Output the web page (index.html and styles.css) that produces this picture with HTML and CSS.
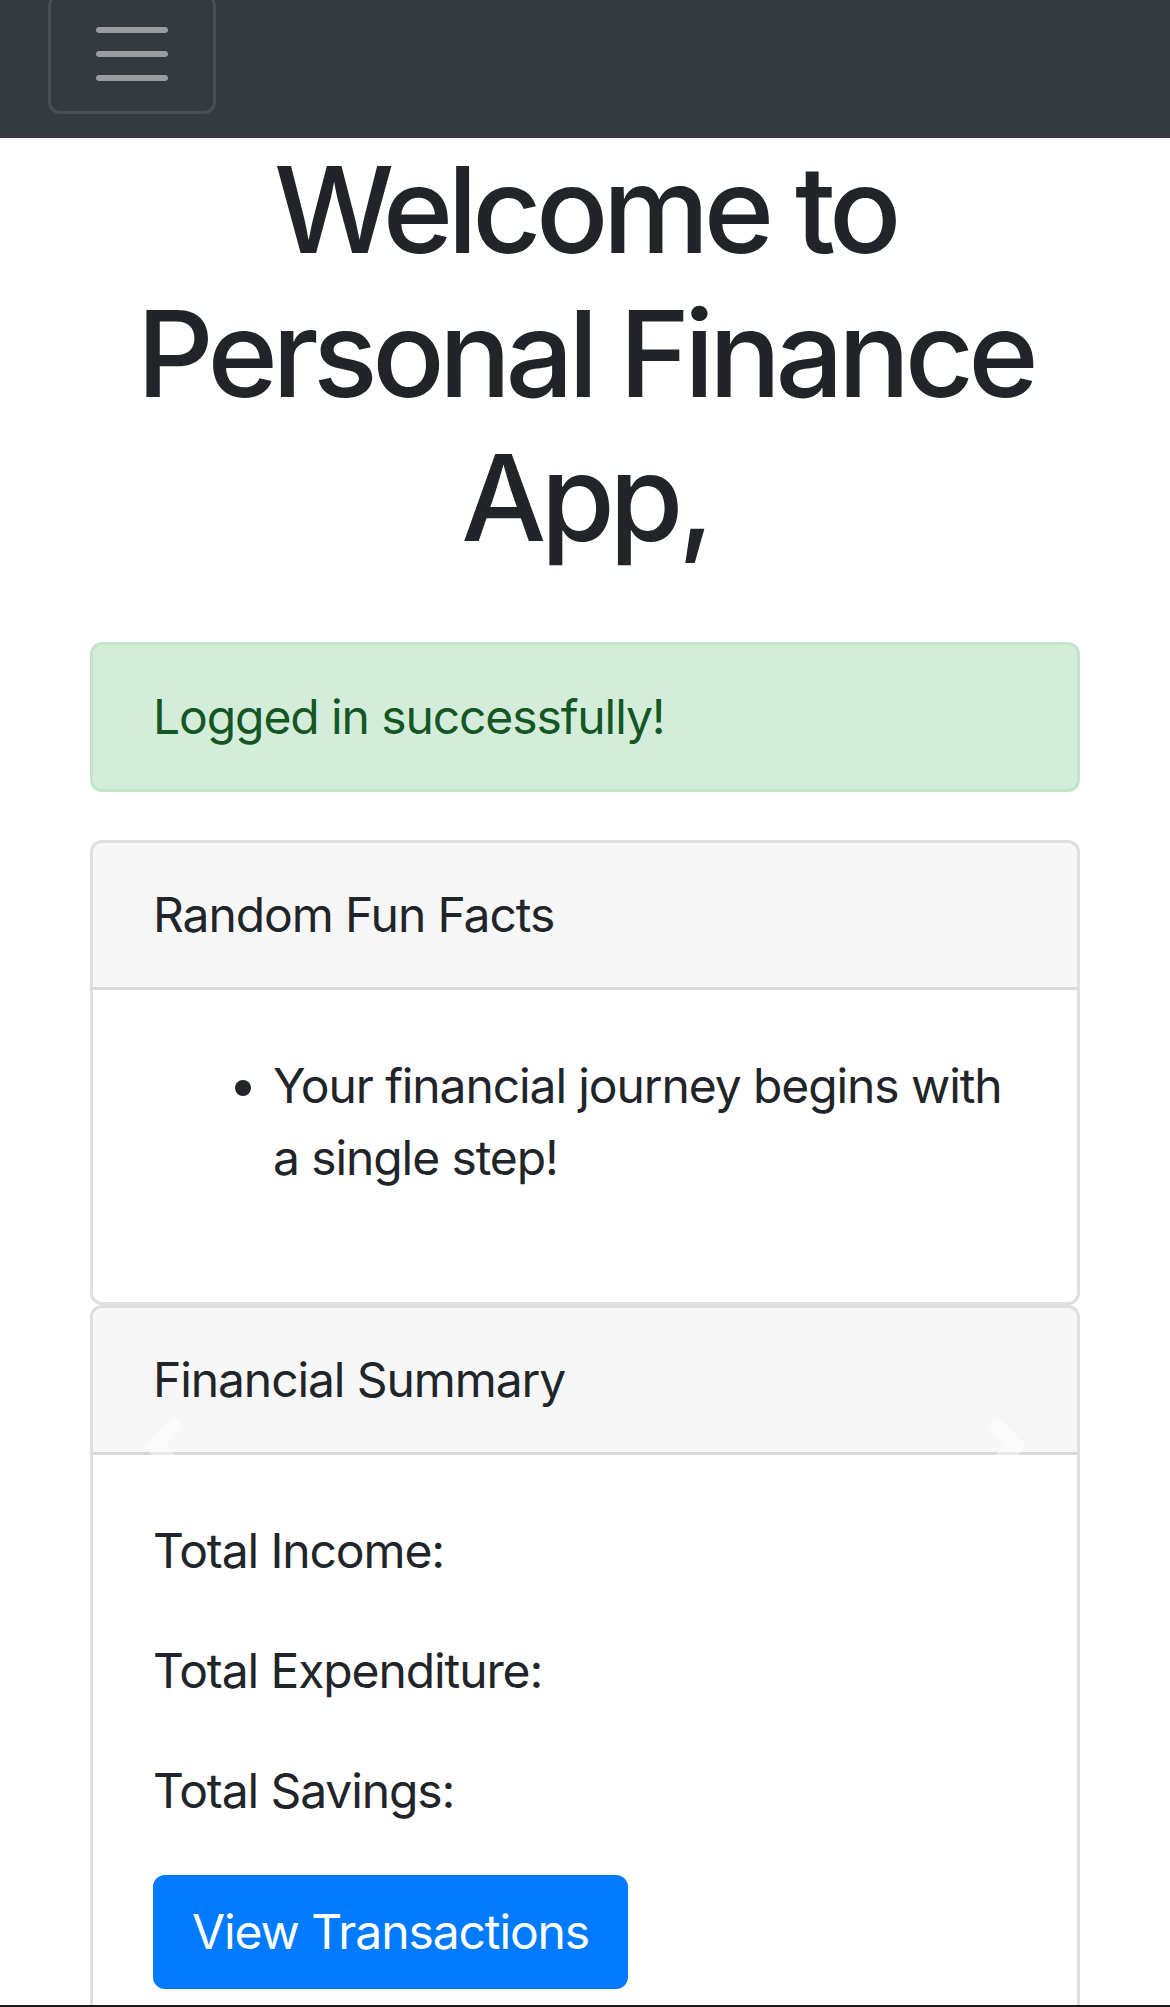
FILE: index.html
```html
<!DOCTYPE html>
<html lang="en">
<head>
<meta charset="utf-8">
<title>Personal Finance App</title>
<link rel="stylesheet" href="styles.css">
</head>
<body>
<nav class="navbar">
  <button class="navbar-toggler" type="button" aria-label="Toggle navigation">
    <svg class="toggler-icon" viewBox="0 0 30 30" width="90" height="90" aria-hidden="true">
      <path d="M4 7h22M4 15h22M4 23h22" stroke="rgba(255,255,255,0.5)" stroke-width="2" stroke-linecap="round" stroke-miterlimit="10" fill="none"/>
    </svg>
  </button>
</nav>
<main class="container">
  <h1 class="welcome">Welcome to Personal Finance App,</h1>
  <div class="content">
    <div class="alert alert-success">Logged in successfully!</div>
    <div class="carousel">
      <div class="card">
        <div class="card-header">Random Fun Facts</div>
        <div class="card-body">
          <ul class="facts">
            <li>Your financial journey begins with a single step!</li>
          </ul>
        </div>
      </div>
      <div class="card">
        <div class="card-header">Financial Summary</div>
        <div class="card-body">
          <p class="stat">Total Income: </p>
          <p class="stat">Total Expenditure: </p>
          <p class="stat">Total Savings: </p>
          <a class="btn btn-primary" href="#">View Transactions</a>
        </div>
      </div>
      <a class="carousel-control carousel-prev" href="#" aria-label="Previous">
        <svg viewBox="0 0 8 8" width="60" height="60" aria-hidden="true"><path fill="#fff" d="M5.25 0l-4 4 4 4 1.5-1.5L4.25 4l2.5-2.5L5.25 0z"/></svg>
      </a>
      <a class="carousel-control carousel-next" href="#" aria-label="Next">
        <svg viewBox="0 0 8 8" width="60" height="60" aria-hidden="true"><path fill="#fff" d="M2.75 0l-1.5 1.5L3.75 4l-2.5 2.5L2.75 8l4-4-4-4z"/></svg>
      </a>
    </div>
  </div>
</main>
<div class="screen-edge"></div>
</body>
</html>
```

FILE: styles.css
```css
* {
  box-sizing: border-box;
}

html, body {
  margin: 0;
  padding: 0;
}

body {
  font-family: Inter, "Noto Sans", "Liberation Sans", sans-serif;
  font-size: 48px;
  line-height: 72px;
  letter-spacing: -1.1px;
  color: #212529;
  background: #fff;
}

.navbar {
  height: 138px;
  padding: 0 48px;
  background: #343a40;
  overflow: hidden;
  display: flex;
  align-items: flex-start;
}

.navbar-toggler {
  margin-top: -6px;
  padding: 12px 36px;
  background: transparent;
  border: 3px solid rgba(255, 255, 255, 0.1);
  border-radius: 12px;
  line-height: 0;
  cursor: pointer;
}

.toggler-icon {
  display: block;
}

.container {
  padding: 0 45px;
}

.welcome {
  margin: 0 0 24px;
  font-size: 120px;
  line-height: 144px;
  font-weight: 500;
  letter-spacing: -5.6px;
  text-align: center;
}

.content {
  margin-top: 72px;
  padding: 0 45px;
}

.alert {
  padding: 36px 60px;
  margin-bottom: 48px;
  border: 3px solid transparent;
  border-radius: 12px;
}

.alert-success {
  color: #155724;
  background: #d4edda;
  border-color: #c3e6cb;
}

.carousel {
  position: relative;
}

.card {
  background: #fff;
  border: 3px solid rgba(0, 0, 0, 0.125);
  border-radius: 12px;
  overflow: hidden;
}

.card-header {
  padding: 36px 60px;
  background: rgba(0, 0, 0, 0.03);
  border-bottom: 3px solid rgba(0, 0, 0, 0.125);
}

.card-body {
  padding: 60px;
}

.facts {
  margin: 0 0 48px;
  padding-left: 120px;
}

.stat {
  margin: 0 0 48px;
}

.btn {
  display: inline-block;
  padding: 18px 36px;
  font-size: 48px;
  line-height: 72px;
  border: 3px solid transparent;
  border-radius: 12px;
  text-decoration: none;
}

.btn-primary {
  color: #fff;
  background: #007bff;
  border-color: #007bff;
}

.carousel-control {
  position: absolute;
  top: 0;
  bottom: 0;
  width: 15%;
  display: flex;
  align-items: center;
  justify-content: center;
  opacity: 0.5;
}

.carousel-control svg {
  display: block;
}

.carousel-prev {
  left: 0;
}

.carousel-next {
  right: 0;
}

.screen-edge {
  position: fixed;
  left: 0;
  right: 0;
  bottom: 0;
  height: 2px;
  background: #1a1a1a;
}
```
